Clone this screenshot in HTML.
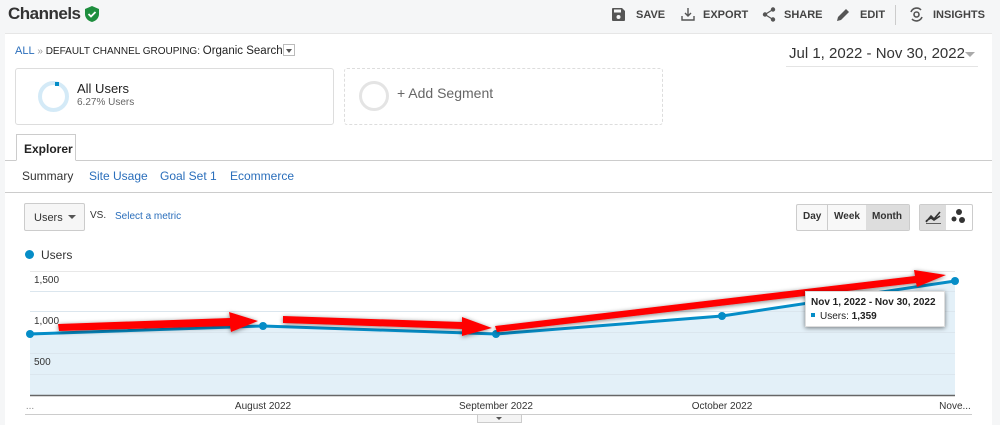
<!DOCTYPE html>
<html><head><style>
*{margin:0;padding:0;box-sizing:border-box}
body{width:1000px;height:425px;background:#f5f6f7;font-family:"Liberation Sans",sans-serif;position:relative;overflow:hidden;color:#333}
.a{position:absolute;white-space:nowrap}
.tb{font-size:11px;color:#444;font-weight:bold;top:9px}
</style></head><body>
<div class="a" style="left:8px;top:4px;font-size:17px;font-weight:bold;color:#333;letter-spacing:-0.5px">Channels</div>
<svg class="a" style="left:85px;top:6px" width="14" height="16" viewBox="0 0 14 16"><path d="M7 0L14 3v5c0 4-3 7-7 8-4-1-7-4-7-8V3z" fill="#1e8e3e"/><path d="M3.5 8l2.5 2.5 4.5-4.5" stroke="#fff" stroke-width="1.8" fill="none"/></svg>
<svg class="a" style="left:612px;top:8px" width="13" height="13" viewBox="0 0 13 13"><path d="M0 1a1 1 0 0 1 1-1h9l3 3v9a1 1 0 0 1-1 1H1a1 1 0 0 1-1-1z" fill="#555"/><rect x="2" y="1.5" width="7" height="3" fill="#f5f6f7"/><circle cx="6.5" cy="9" r="2" fill="#f5f6f7"/></svg>
<div class="a tb" style="left:636px">SAVE</div>
<svg class="a" style="left:681px;top:7px" width="14" height="14" viewBox="0 0 14 14" fill="none" stroke="#555" stroke-width="1.4"><path d="M7 1v8M4 6l3 3 3-3M1 9v4h12V9"/></svg>
<div class="a tb" style="left:703px">EXPORT</div>
<svg class="a" style="left:762px;top:7px" width="14" height="15" viewBox="0 0 14 15"><circle cx="11" cy="2.5" r="2.2" fill="#555"/><circle cx="3" cy="7.5" r="2.2" fill="#555"/><circle cx="11" cy="12.5" r="2.2" fill="#555"/><path d="M11 2.5L3 7.5 11 12.5" stroke="#555" stroke-width="1.2" fill="none"/></svg>
<div class="a tb" style="left:784px">SHARE</div>
<svg class="a" style="left:837px;top:8px" width="13" height="13" viewBox="0 0 13 13"><path d="M0 13l1-4 8-8 3 3-8 8z" fill="#555"/></svg>
<div class="a tb" style="left:860px">EDIT</div>
<div class="a" style="left:895px;top:5px;width:1px;height:20px;background:#ccc"></div>
<svg class="a" style="left:909px;top:7px" width="15" height="15" viewBox="0 0 15 15" fill="none" stroke="#555" stroke-width="1.6"><circle cx="7.5" cy="7.5" r="2.5"/><path d="M2 5a6 6 0 0 1 10-2M13 10a6 6 0 0 1-10 2"/></svg>
<div class="a tb" style="left:933px">INSIGHTS</div>

<div class="a" style="left:5px;top:33px;width:987px;height:392px;background:#fff;border-top:1px solid #e6e6e6"></div>
<div class="a" style="left:15px;top:45px;font-size:10px;color:#222"><span style="color:#2a6ebb;font-size:11px">ALL</span> <span style="color:#999">»</span> DEFAULT CHANNEL GROUPING: <span style="font-size:11.5px">Organic Search</span></div>
<div class="a" style="left:283px;top:44px;width:12px;height:12px;border:1px solid #bbb;background:#fff"><div style="margin:4px 0 0 2px;border:3px solid transparent;border-top:4px solid #555;width:0"></div></div>
<div class="a" style="left:789px;top:45px;font-size:15px;color:#333">Jul 1, 2022 - Nov 30, 2022</div>
<div class="a" style="left:965px;top:52px;border:5px solid transparent;border-top:5px solid #aaa"></div>
<div class="a" style="left:786px;top:66px;width:192px;height:1px;background:#e4e4e4"></div>

<div class="a" style="left:15px;top:68px;width:319px;height:57px;border:1px solid #ddd;border-radius:3px"></div>
<div class="a" style="left:38px;top:81px;width:31px;height:31px;border:4px solid #d4eaf7;border-radius:50%"></div>
<div class="a" style="left:55px;top:82px;width:4px;height:4px;background:#058dc7"></div>
<div class="a" style="left:77px;top:81px;font-size:13px;color:#222">All Users</div>
<div class="a" style="left:77px;top:97px;font-size:10px;color:#666">6.27% Users</div>
<div class="a" style="left:344px;top:68px;width:319px;height:57px;border:1px dashed #ddd;border-radius:3px"></div>
<div class="a" style="left:359px;top:81px;width:30px;height:30px;border:3px solid #e4e4e4;border-radius:50%"></div>
<div class="a" style="left:397px;top:85px;font-size:14px;color:#666">+ Add Segment</div>

<div class="a" style="left:5px;top:160px;width:987px;height:1px;background:#ccc"></div>
<div class="a" style="left:16px;top:134px;width:60px;height:27px;border:1px solid #ccc;border-bottom:1px solid #fff;background:#fff;font-size:12px;font-weight:bold;padding:7px 0 0 7px;color:#222">Explorer</div>
<div class="a" style="left:22px;top:169px;font-size:12px;color:#333">Summary</div>
<div class="a" style="left:89px;top:169px;font-size:12px;color:#2a6ebb">Site Usage</div>
<div class="a" style="left:160px;top:169px;font-size:12px;color:#2a6ebb">Goal Set 1</div>
<div class="a" style="left:230px;top:169px;font-size:12px;color:#2a6ebb">Ecommerce</div>
<div class="a" style="left:5px;top:192px;width:987px;height:1px;background:#ccc"></div>

<div class="a" style="left:24px;top:203px;width:61px;height:28px;border:1px solid #ccc;border-radius:2px;background:#f6f6f6;font-size:11px;padding:8px 0 0 9px">Users</div>
<div class="a" style="left:68px;top:215px;border:4px solid transparent;border-top:4px solid #555"></div>
<div class="a" style="left:90px;top:210px;font-size:10px;color:#333">VS.</div>
<div class="a" style="left:115px;top:211px;font-size:10px;color:#2a6ebb">Select a metric</div>

<div class="a" style="left:796px;top:204px;width:114px;height:27px;border:1px solid #ccc;border-radius:2px;background:#f8f8f8;font-size:11px;font-weight:bold"></div>
<div class="a" style="left:803px;top:211px;font-size:10px;font-weight:bold">Day</div>
<div class="a" style="left:827px;top:205px;width:1px;height:25px;background:#ccc"></div>
<div class="a" style="left:834px;top:211px;font-size:10px;font-weight:bold">Week</div>
<div class="a" style="left:866px;top:205px;width:43px;height:25px;background:#ddd;font-size:10px;font-weight:bold;padding:6px 0 0 6px">Month</div>
<div class="a" style="left:919px;top:204px;width:54px;height:27px;border:1px solid #ccc;border-radius:2px;background:#fff"></div>
<div class="a" style="left:920px;top:205px;width:26px;height:25px;background:#ddd"></div>
<svg class="a" style="left:925px;top:209px" width="16" height="15" viewBox="0 0 16 15" fill="none" stroke="#333" stroke-width="1.6"><path d="M1 13L6 7l3 3 6-7M1 15h15M1 12l5-3 3 2 6-4"/></svg>
<svg class="a" style="left:950px;top:208px" width="16" height="16"><circle cx="9" cy="4" r="3" fill="#333"/><circle cx="4" cy="11" r="2.5" fill="#333"/><circle cx="12" cy="12" r="3" fill="#333"/></svg>

<div class="a" style="left:25px;top:250px;width:9px;height:9px;border-radius:50%;background:#058dc7"></div>
<div class="a" style="left:41px;top:248px;font-size:12px;color:#333">Users</div>

<svg class="a" style="left:0;top:260px" width="1000" height="165" viewBox="0 260 1000 165">
<defs><filter id="s" x="-5%" y="-100%" width="110%" height="300%"><feGaussianBlur in="SourceAlpha" stdDeviation="2.5"/><feOffset dy="1"/><feComponentTransfer><feFuncA type="linear" slope="0.5"/></feComponentTransfer><feMerge><feMergeNode/><feMergeNode in="SourceGraphic"/></feMerge></filter></defs>
<g stroke="#e8e8e8" stroke-width="1"><line x1="30" x2="955" y1="271.5" y2="271.5"/><line x1="30" x2="955" y1="291.5" y2="291.5"/><line x1="30" x2="955" y1="311.5" y2="311.5"/><line x1="30" x2="955" y1="332.5" y2="332.5"/><line x1="30" x2="955" y1="353.5" y2="353.5"/><line x1="30" x2="955" y1="374.5" y2="374.5"/></g>
<path d="M30 334L263 326L496 334L722 316L955 281V395H30z" fill="#e3f0f8"/>
<g stroke="#dbe6ee" stroke-width="1"><line x1="30" x2="955" y1="353.5" y2="353.5"/><line x1="30" x2="955" y1="374.5" y2="374.5"/><line x1="30" x2="955" y1="332.5" y2="332.5"/><line x1="30" x2="955" y1="311.5" y2="311.5"/><line x1="30" x2="955" y1="291.5" y2="291.5"/></g>
<line x1="30" x2="955" y1="395.5" y2="395.5" stroke="#666" stroke-width="1.5"/>
<path d="M30 334L263 326L496 334L722 316L955 281" fill="none" stroke="#058dc7" stroke-width="3"/>
<g fill="#058dc7"><circle cx="30" cy="334" r="4"/><circle cx="263" cy="326" r="4"/><circle cx="496" cy="334" r="4"/><circle cx="722" cy="316" r="4"/><circle cx="955" cy="281" r="4"/></g>
<g font-size="10" fill="#333" font-family="Liberation Sans"><text x="34" y="283">1,500</text><text x="34" y="324">1,000</text><text x="34" y="365">500</text>
<text x="30" y="409" text-anchor="middle" fill="#888">...</text><text x="263" y="409" text-anchor="middle">August 2022</text><text x="496" y="409" text-anchor="middle">September 2022</text><text x="722" y="409" text-anchor="middle">October 2022</text><text x="955" y="409" text-anchor="middle">Nove...</text></g>
<g fill="#f00" filter="url(#s)">
<path d="M58 324L230 318L229 312L258 321L231 332L230 326L59 331z"/>
<path d="M283 316L462 322L462 317L492 328L462 336L462 329L283 323z"/>
<path d="M495 326L915 276L914 270L946 275L917 287L916 283L497 332z"/>
</g>
<rect x="805.5" y="291.5" width="139" height="35" fill="#fff" stroke="#ddd" filter="url(#s)"/>
<text x="811" y="305" font-size="10" font-weight="bold" fill="#222" font-family="Liberation Sans">Nov 1, 2022 - Nov 30, 2022</text>
<rect x="811" y="313" width="4" height="4" fill="#058dc7"/>
<text x="820" y="319" font-size="10" fill="#222" font-family="Liberation Sans">Users: <tspan font-weight="bold">1,359</tspan></text>
<line x1="25" x2="972" y1="414.5" y2="414.5" stroke="#ccc"/>
<rect x="477.5" y="414.5" width="44" height="8" fill="#f4f4f4" stroke="#ccc"/>
<path d="M496 417h6l-3 3z" fill="#555"/>
</svg>
</body></html>
